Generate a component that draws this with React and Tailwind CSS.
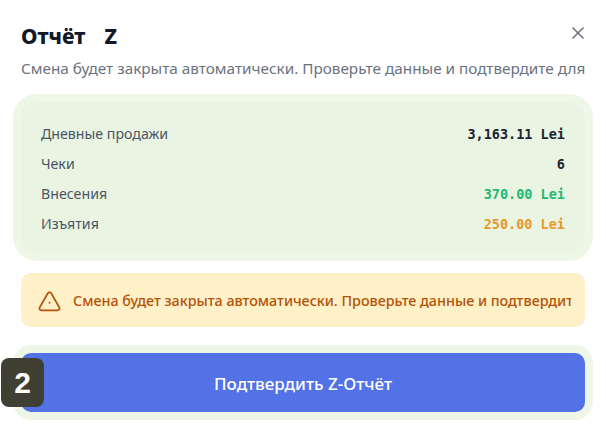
import { X } from 'lucide-react';

const rows = [
  { label: 'Дневные продажи', value: '3,163.11 Lei', color: 'text-[#1a2433]' },
  { label: 'Чеки', value: '6', color: 'text-[#1a2433]' },
  { label: 'Внесения', value: '370.00 Lei', color: 'text-[#25b872]' },
  { label: 'Изъятия', value: '250.00 Lei', color: 'text-[#e89a25]' },
];

const text = 'Смена будет закрыта автоматически. Проверьте данные и подтвердите для продолжения';

export default function App() {
  return (
    <div className="relative h-[435px] w-[606px] overflow-hidden bg-white font-['Noto_Sans',sans-serif]">
      <div className="flex flex-col px-[21px] pt-[22px]">
        {/* Header */}
        <div className="flex items-start justify-between">
          <h2 className="whitespace-pre text-[21px] leading-[28px] font-extrabold text-[#111827] [word-spacing:1px]">Отчёт   Z</h2>
          <button className="-mr-[3px] mt-[1px] text-[#6b7280]">
            <X className="h-[20px] w-[20px]" strokeWidth={2} />
          </button>
        </div>
        <p className="mt-[6px] w-[564px] overflow-hidden whitespace-nowrap text-[15.3px] leading-[24px] text-[#6b7280]">
          {text}
        </p>

        {/* Summary */}
        <div className="mt-[22px] flex flex-col gap-[10px] rounded-[16px] bg-[#eaf4e3] pt-[22px] pr-[20px] pb-[19px] pl-[20px] ring-8 ring-[#eef7e7]">
          {rows.map((row) => (
            <div key={row.label} className="flex h-[20px] items-center justify-between">
              <span className="text-[14.2px] text-[#4b5563]">{row.label}</span>
              <span className={`font-['DejaVu_Sans_Mono',monospace] text-[13.5px] font-bold ${row.color}`}>
                {row.value}
              </span>
            </div>
          ))}
        </div>

        {/* Warning */}
        <div className="mt-[20px] flex h-[54px] items-center gap-[11px] rounded-[10px] bg-[#fef0c7] pr-[14px] pl-[16px]">
          <svg viewBox="0 0 24 24" className="mt-[2px] h-[25px] w-[25px] shrink-0 text-[#b45309]" fill="none" stroke="currentColor" strokeWidth="1.75" strokeLinecap="round" strokeLinejoin="round">
            <path d="M10.3 4.2 2.6 17.6A2 2 0 0 0 4.3 20.6h15.4a2 2 0 0 0 1.7-3L13.7 4.2a2 2 0 0 0-3.4 0Z" />
            <path d="M12 13.2h.01" />
          </svg>
          <span className="overflow-hidden whitespace-nowrap pt-[2px] text-[14.3px] font-medium text-[#b45309]">{text}</span>
        </div>

        {/* Confirm */}
        <button className="mt-[26px] h-[59px] rounded-[10px] bg-[#5272e6] pt-[2px] text-[17px] font-medium text-white ring-8 ring-[#eef7e7]">
          Подтвердить Z-Отчёт
        </button>
      </div>

      {/* Shortcut badge */}
      <div className="absolute top-[358px] left-[1px] flex h-[49px] w-[43px] items-center justify-center rounded-[8px] bg-[#3f3f33] font-['Liberation_Sans',sans-serif] text-[30px] font-bold text-white">
        2
      </div>
    </div>
  );
}
